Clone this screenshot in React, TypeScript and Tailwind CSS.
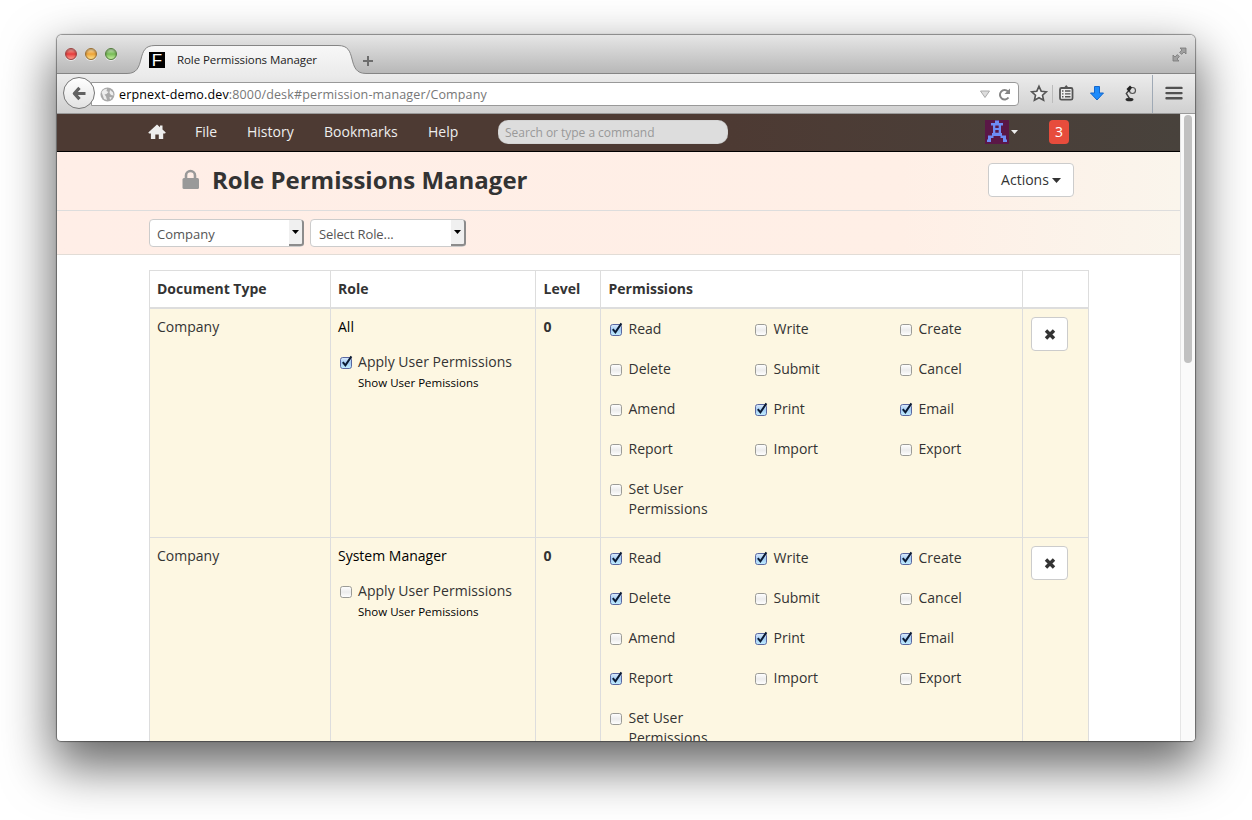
import React from "react";

const open = "font-['Open_Sans','Noto_Sans',sans-serif]";

function Light({ className }: { className: string }) {
  return (
    <span
      className={`h-3 w-3 rounded-full border shadow-[0_1px_0_rgba(255,255,255,0.6),inset_0_1px_2px_rgba(0,0,0,0.35)] ${className}`}
    />
  );
}

function Check({ on }: { on?: boolean }) {
  return (
    <svg width="14" height="15" viewBox="0 0 14 15" className="shrink-0 overflow-visible">
      <defs>
        <linearGradient id="on" x1="0" y1="0" x2="0" y2="1">
          <stop offset="0" stopColor="#dcebfb" />
          <stop offset="0.5" stopColor="#a4cdf5" />
          <stop offset="1" stopColor="#c3efff" />
        </linearGradient>
        <linearGradient id="off" x1="0" y1="0" x2="0" y2="1">
          <stop offset="0" stopColor="#ffffff" />
          <stop offset="0.5" stopColor="#ececec" />
          <stop offset="1" stopColor="#ffffff" />
        </linearGradient>
      </defs>
      <rect x="0.5" y="2.5" width="11" height="11" rx="2.200" fill={on ? "url(#on)" : "url(#off)"} stroke={on ? "#5a67a0" : "#9b9b96"} />
      {on && <path d="M2.8 7.2 L5.4 10.4 L11.4 1.4" fill="none" stroke="#0b1a33" strokeWidth="2" />}
    </svg>
  );
}

const labels = [
  "Read", "Write", "Create",
  "Delete", "Submit", "Cancel",
  "Amend", "Print", "Email",
  "Report", "Import", "Export",
  "Set User Permissions",
];

function Row({ role, apply, on }: { role: string; apply: boolean; on: string[] }) {
  return (
    <div className="flex h-[229px] border-b border-[#ddd] bg-[#fdf7e2]">
      <div className="w-[181px] border-r border-[#ddd] px-[7px] pt-2 text-[#333]">Company</div>
      <div className="w-[205px] border-r border-[#ddd] px-[7px] pt-2 text-black">
        {role}
        <div className="mt-[15px] flex text-[#333]">
          <span className="ml-0.5 mt-[3px] flex"><Check on={apply} /></span>
          <span className="ml-1 tracking-[0.03px]">Apply User Permissions</span>
        </div>
        <div className="ml-5 text-[11.5px] leading-[21px]">Show User Pemissions</div>
      </div>
      <div className="w-[65px] border-r border-[#ddd] px-[7.500px] pt-2 font-bold text-[#333]">0</div>
      <div className="grid w-[422px] auto-rows-[40px] grid-cols-[145px_145px_120px] content-start border-r border-[#ddd] pl-[9px] pt-2.5 text-[#333]">
        {labels.map((l) => (
          <div key={l} className="flex items-start">
            <span className="mt-[3px] flex"><Check on={on.includes(l)} /></span>
            <span className="ml-[4.500px] w-[90px]">{l}</span>
          </div>
        ))}
      </div>
      <div className="px-2 pt-2">
        <div className="flex h-[34px] w-[37px] items-center justify-center rounded border border-[#ccc] bg-white">
          <svg width="12" height="12" viewBox="0 0 12 12"><path d="M2 2.500 L10 10.500 M10 2.500 L2 10.500" stroke="#333" strokeWidth="3.4" /></svg>
        </div>
      </div>
    </div>
  );
}

function Select({ text, className, textClass }: { text: string; className: string; textClass: string }) {
  return (
    <div className={`flex h-7 justify-between rounded border border-[#ccc] bg-white text-[13px] leading-[29px] text-[#555] ${className}`}>
      <span className={textClass}>{text}</span>
      <span className="-mr-px flex w-[15px] items-center justify-center rounded-r-[3px] border-b-2 border-r-2 border-[#8c8c8c] bg-[#f0f0f0]">
        <svg width="7" height="4" viewBox="0 0 7 4" className="shrink-0"><path d="M0 0H7L3.5 4Z" fill="#000" /></svg>
      </span>
    </div>
  );
}

function TabStrip() {
  return (
    <div className="relative flex h-[38px] bg-linear-to-b from-[#e6e6e6] to-[#b8b8b8]">
      <div className="flex gap-2 pl-2 pt-[13px]">
        <Light className="border-[#9c4040] bg-linear-to-b from-[#f7a49e] via-[#e5393c] to-[#ff9b90]" />
        <Light className="border-[#9a6d2f] bg-linear-to-b from-[#ffe3a6] via-[#eda334] to-[#ffe58d]" />
        <Light className="border-[#507c3a] bg-linear-to-b from-[#cdeabc] via-[#76bb55] to-[#c9f3a2]" />
      </div>
      <svg width="1138" height="39" viewBox="0 0 1138 39" className="absolute left-0 top-0">
        <defs>
          <linearGradient id="tab" x1="0" y1="0" x2="0" y2="1">
            <stop offset="0" stopColor="#f8f8f8" />
            <stop offset="1" stopColor="#ebebeb" />
          </linearGradient>
        </defs>
        <path d="M0 38.5H70C80 38.5 82 32 84 24C86 16 88 10.5 98 10.5H281C291 10.5 293 16 295 24C297 32 299 38.5 309 38.5H1138V40H0Z" fill="url(#tab)" stroke="#858585" />
      </svg>
      <div className="relative ml-8 mt-[17px] flex h-4 w-4 items-center justify-center bg-black font-['Liberation_Sans',sans-serif] text-[17px] leading-none text-white">F</div>
      <span className="relative ml-3 mt-[17px] w-[141px] whitespace-nowrap text-[11.5px] leading-4 tracking-[-0.08px] text-[#222]">Role Permissions Manager</span>
      <svg width="10" height="10" viewBox="0 0 10 10" className="relative ml-[45px] mt-[21px]"><path d="M5 0V10M0 5H10" stroke="#6d6d6d" strokeWidth="2" /></svg>
      <svg width="15" height="15" viewBox="0 0 15 15" className="relative ml-auto mr-2 mt-3">
        <path d="M8 1H14V7L12 5L9.6 7.4L7.6 5.4L10 3Z M7 14H1V8L3 10L5.4 7.6L7.4 9.6L5 12Z" fill="#a0a0a0" stroke="#777" strokeWidth="0.8" />
      </svg>
    </div>
  );
}

function Toolbar() {
  return (
    <div className="flex h-[41px] items-center border-b border-[#999] bg-linear-to-b from-[#ededed] to-[#d0d0d0] pl-1.5">
      <div className="relative z-10 flex h-8 w-8 shrink-0 items-center justify-center rounded-full border border-[#777] bg-linear-to-b from-white to-[#e2e2e2]">
        <svg width="14" height="15" viewBox="0 0 14 15"><path d="M7.5 1.800L2.300 7.500L7.500 13.200M2.800 7.500H13.500" fill="none" stroke="#616161" strokeWidth="3.200" strokeLinejoin="round" /></svg>
      </div>
      <div className="-ml-1 mt-0.5 flex h-6 w-[928px] shrink-0 items-center rounded-r border border-[#999] bg-white pl-[8px]">
        <svg width="15" height="15" viewBox="0 0 15 15">
          <circle cx="7.5" cy="7.5" r="7" fill="#a9a9a9" />
          <path d="M1.500 5L4 2.500L7 1.800L6.500 4L8.500 5L6.500 7L4.500 7.500L6 9.500L7 13L4 12L3 9Z M10 3L13 5.500L13.500 8.500L11 8L9.500 6Z M9.500 10L12 10.500L10 12.800Z" fill="#ededed" />
        </svg>
        <span className="ml-1 mt-px whitespace-nowrap text-[12.500px] tracking-[0.148px] text-[#777]"><span className="text-black">erpnext-demo.dev</span>:8000/desk#permission-manager/Company</span>
        <svg width="10" height="9" viewBox="0 0 10 9" className="ml-auto"><path d="M0.500 1H9.500L5 7.500Z" fill="#ddd" stroke="#aaa" /></svg>
        <svg width="13" height="13" viewBox="0 0 13 13" className="ml-2 mr-[7px]"><path d="M10.500 9.500A4.700 4.700 0 1 1 10 3.500" fill="none" stroke="#858585" strokeWidth="2" /><path d="M12 0.500V6H6.500Z" fill="#858585" /></svg>
      </div>
      <svg width="170" height="38" viewBox="0 0 170 38" className="ml-1 mt-0.5 shrink-0">
        <path d="M16 11.300L18.200 16.200L23.300 16.800L19.500 20.200L20.600 25.300L16 22.700L11.400 25.300L12.500 20.200L8.700 16.800L13.800 16.200Z" fill="#eee" stroke="#555" strokeWidth="1.600" />
        <path d="M29.500 10V28" stroke="#bbb" />
        <rect x="37" y="13" width="12.500" height="11.700" rx="1.500" fill="#eee" stroke="#555" strokeWidth="1.800" />
        <path d="M39.500 13V12H41.500L43.200 10L45 12H47V13Z" fill="#555" />
        <path d="M39 16H40.500M42 16H47.500M39 18.900H40.500M42 18.900H47.500M39 21.800H40.500M42 21.800H47.500" stroke="#555" strokeWidth="1.400" />
        <path d="M71.500 11.500H76.500V18H80.500L74 25L67.500 18H71.500Z" fill="#1d8bfb" stroke="#1467cc" />
        <ellipse cx="106.500" cy="24.500" rx="4" ry="1.800" fill="#2b2b2b" />
        <path d="M106.500 23.500L103.300 18.500L107 14" fill="none" stroke="#444" strokeWidth="1.400" />
        <circle cx="109.500" cy="15.500" r="3" fill="#ddd" stroke="#555" strokeWidth="1.200" />
        <path d="M103.500 14L107 10.500L109 12.500L106 17Z" fill="#222" />
        <path d="M129.500 0V38" stroke="#9fa9b5" />
        <path d="M143.500 12.900H158.500M143.500 18.100H158.500M143.500 23.300H158.500" stroke="#515151" strokeWidth="2.400" strokeLinecap="round" />
      </svg>
    </div>
  );
}

function Avatar() {
  return (
    <svg width="24" height="24" viewBox="0 0 24 24">
      <path d="M0 0H24V24H0Z" fill="#5a1746" />
      <path
        d="M10 0.500H14V3H18V5.500H16V13H17V15.500H21V19.500H22V22H18V18H15.500V16H8.500V18H6V22H2V19.500H3V15.500H7V13H8V5.500H6V3H10Z M10.300 5.500V8H13.700V5.500Z M10.300 10V12.800H13.700V10Z"
        fill="#6d8cf5"
        fillRule="evenodd"
      />
    </svg>
  );
}

export default function App() {
  return (
    <div className={`h-[820px] w-[1252px] overflow-hidden bg-white pl-[57px] pt-[35px] text-[14px] leading-5 ${open}`}>
      <div className="flex h-[706px] w-[1138px] flex-col overflow-hidden rounded-t-[5px] rounded-b-[4px] bg-white shadow-[0_0_1px_1px_rgba(0,0,0,0.4),0_22px_50px_4px_rgba(0,0,0,0.6)]">
        <TabStrip />
        <Toolbar />
        <div className="flex min-h-0 flex-1">
          <div className="w-[1123px] overflow-hidden">
            <div className="flex h-[38px] items-center border-b border-black bg-linear-to-r from-[#4d3a33] from-60% to-[#48423c] pb-0.5 pl-[91px] text-[#eee]">
              <svg width="18" height="16" viewBox="0 0 18 16" className="mt-px">
                <path d="M9 0.500L12 3.300V1.500H14.500V5.500L17.800 8.500L17 9.500H15.200V15H10.800V10.500H7.300V15H2.900V9.500H1L0.300 8.500Z" fill="#eee" />
              </svg>
              <span className="ml-[29px] w-[52px]">File</span>
              <span className="w-[77px]">History</span>
              <span className="w-[104px]">Bookmarks</span>
              <span className="w-[70px]">Help</span>
              <div className="h-6 w-[230px] rounded-[10px] bg-[#ddd] pl-[7px] text-[12px] leading-[25px] tracking-[-0.03px] text-[#999] shadow-[inset_0_0_1px_#888]">Search or type a command</div>
              <div className="ml-[257px] mt-px"><Avatar /></div>
              <svg width="7" height="4" viewBox="0 0 7 4" className="ml-[2px] mt-px"><path d="M0 0H7L3.500 4Z" fill="#eee" /></svg>
              <span className="ml-[31px] h-6 w-5 rounded-sm bg-[#e74c3c] text-center leading-6 text-white">3</span>
            </div>
            <div className="bg-linear-to-r from-[#ffeee7] via-[#ffefe6] via-75% to-[#faf5ec]">
              <div className="flex h-[59px] border-b border-[#ddd] pl-[125px]">
                <svg width="17" height="20" viewBox="0 0 17 20" className="mt-[17px]">
                  <path d="M4 10V6.500A4.500 4.500 0 0 1 13 6.500V10" fill="none" stroke="#999" strokeWidth="2.600" />
                  <rect x="0.500" y="9" width="16.500" height="11" rx="1.500" fill="#999" />
                </svg>
                <h1 className="ml-[13px] mt-[11px] w-[776px] text-[24px] font-bold leading-[33px] text-[#333]">Role Permissions Manager</h1>
                <div className="mt-[11px] flex h-[34px] w-[86px] items-center justify-center gap-[3px] rounded border border-[#ccc] bg-white text-[#333]">
                  Actions <svg width="9" height="5" viewBox="0 0 9 5"><path d="M0 0H9L4.500 5Z" fill="#333" /></svg>
                </div>
              </div>
              <div className="flex h-11 gap-1.5 border-b border-[#e2dcd6] pl-[92px] pt-2">
                <Select text="Company" className="w-[155px]" textClass="pl-[7px]" />
                <Select text="Select Role..." className="w-[156px]" textClass="pl-2 tracking-[-0.1px]" />
              </div>
            </div>
            <div className="ml-[92px] mt-[15px] w-[940px] border border-[#ddd]">
              <div className="flex h-[38px] border-b-2 border-[#ddd] font-bold leading-9 text-[#333]">
                <div className="w-[181px] border-r border-[#ddd] px-[7px]">Document Type</div>
                <div className="w-[205px] border-r border-[#ddd] px-[7px]">Role</div>
                <div className="w-[65px] border-r border-[#ddd] px-[7.500px]">Level</div>
                <div className="w-[422px] border-r border-[#ddd] px-[7.500px]">Permissions</div>
              </div>
              <Row role="All" apply on={["Read", "Print", "Email"]} />
              <Row role="System Manager" apply={false} on={["Read", "Write", "Create", "Delete", "Print", "Email", "Report"]} />
            </div>
          </div>
          <div className="flex w-[15px] justify-center border-l border-[#e5e5e5] bg-[#fafafa] pt-px">
            <div className="h-[248px] w-2 rounded-full bg-[#c1c1c1]" />
          </div>
        </div>
      </div>
    </div>
  );
}
